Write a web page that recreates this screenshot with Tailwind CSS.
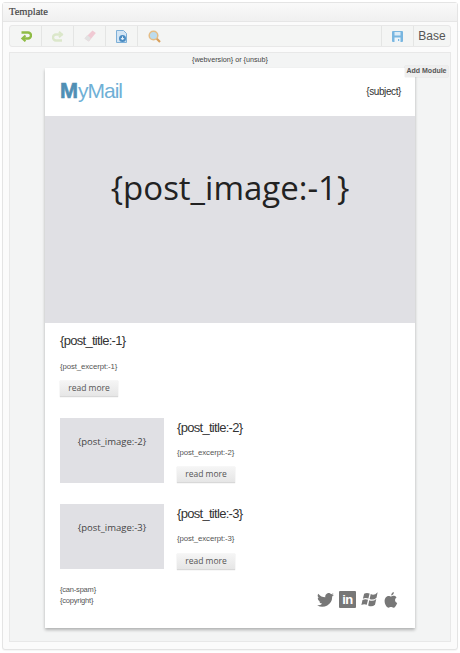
<!DOCTYPE html>
<html lang="en">
<head>
    <meta charset="UTF-8">
    <meta name="viewport" content="width=device-width, initial-scale=1.0">
    <title>Template</title>
    <script src="https://cdn.jsdelivr.net/npm/@tailwindcss/browser@4"></script>
</head>
<body class="bg-white font-['Liberation_Sans',sans-serif] text-[#333] overflow-hidden">
    <div class="w-[460px] h-[653px] pt-[2px] pl-[2px] pr-[2px]">
        <div class="h-[648px] border border-[#e4e4e4] rounded-[3px] bg-[#fbfbfb] shadow-[0_1px_1px_rgba(0,0,0,0.04)]">
            <!-- Header -->
            <div class="h-[19px] flex items-center pl-[6px] border-b border-[#e6e6e6] bg-gradient-to-b from-[#f9f9f9] to-[#f0f0f0] font-['Liberation_Serif',serif] text-[10.500px] [-webkit-text-stroke:0.2px_#464646] text-[#464646]">
                Template
            </div>

            <div class="pt-[3px] px-[6px]">
                <!-- Toolbar -->
                <div class="h-[22px] w-[442px] flex items-stretch border border-[#e8e8e8] rounded-[3px] bg-[#f4f5f4]">
                    <div class="w-[32px] flex items-center justify-center border-r border-[#e4e5e4]">
                        <svg width="12" height="11" viewBox="0 0 12 11" fill="none" stroke="#8fbc45" stroke-width="2.4"><path d="M1.500 1.500h6.500a3 3 0 0 1 0 6H3.500"/><path d="M5.500 4.500 2.300 7.500l3.200 2.800" stroke-width="2"/></svg>
                    </div>
                    <div class="w-[32px] flex items-center justify-center border-r border-[#e4e5e4]">
                        <svg width="12" height="11" viewBox="0 0 12 11" fill="none" stroke="#dbe7ca" stroke-width="2.400"><path d="M10.500 3.500H4a3 3 0 0 0 0 6h6"/><path d="M7 .7 10 3.500 7 6.200" stroke-width="2"/></svg>
                    </div>
                    <div class="w-[32px] flex items-center justify-center border-r border-[#e4e5e4]">
                        <svg width="12" height="12" viewBox="0 0 12 12"><path d="M8.500.5 11.800 3 4.800 11.500 .5 8.500z" fill="#f0c9d3"/><path d="M3.200 5 6.800 8 4.800 11.500 .5 8.500z" fill="#e2e2e2"/></svg>
                    </div>
                    <div class="w-[32px] flex items-center justify-center border-r border-[#e4e5e4]">
                        <svg width="11" height="13" viewBox="0 0 11 13"><path d="M.5.500h7l3 3v9H.5z" fill="#d3e5f4" stroke="#7eb0d8"/><circle cx="6.500" cy="8.500" r="3.500" fill="#4a8cc2"/><path d="M6.500 6.500v2.500M5 8l1.500 2L8 8" fill="none" stroke="#e8f2fa"/></svg>
                    </div>
                    <div class="w-[32px] flex items-center justify-center">
                        <svg width="13" height="13" viewBox="0 0 13 13"><circle cx="5.500" cy="5.500" r="4.300" fill="#bcdcee" stroke="#e5bd85" stroke-width="1.500"/><path d="M8.800 8.800l3.200 3.200" stroke="#d9a05c" stroke-width="2.200"/></svg>
                    </div>
                    <div class="ml-auto w-[32px] flex items-center justify-center border-l border-[#e4e5e4]">
                        <svg width="11" height="11" viewBox="0 0 11 11"><rect width="11" height="11" rx="1" fill="#79b6e0"/><rect x="2.500" y="1" width="6" height="3.500" fill="#dcecf7"/><rect x="2.500" y="6.500" width="6" height="4.500" fill="#eef5fa"/><rect x="6" y="8" width="1.200" height="2" fill="#79b6e0"/></svg>
                    </div>
                    <div class="w-[37px] flex items-center justify-center border-l border-[#e4e5e4] text-[12px] text-[#555]">Base</div>
                </div>

                <!-- Canvas -->
                <div class="relative mt-[5px] h-[590px] w-[442px] border border-[#e8e8e8] bg-[#f3f4f4] pl-[35px]">
                    <div class="h-[15px] w-[370px] flex items-center justify-center text-[7.200px] text-[#444]">{webversion} or {unsub}</div>
                    <div class="w-[370px] h-[560px] bg-white shadow-[0_2px_3px_rgba(0,0,0,0.28)]">
                        <div class="h-[48px] flex items-center justify-between pl-[15px] pr-[14px] pb-[2px]">
                            <div class="flex items-baseline text-[21px] leading-none tracking-[-1px] text-[#6fb0d6]"><span class="font-bold text-[21.600px] tracking-[0] text-[#4f8fb4] [-webkit-text-stroke:0.6px_#4f8fb4]">M</span>yMail</div>
                            <div class="text-[10px] tracking-[-0.4px] text-[#333]">{subject}</div>
                        </div>
                        <div class="h-[207px] pb-[64px] bg-[#e0e0e4] flex items-center justify-center font-['Open_Sans',sans-serif] text-[33px] text-[#222]">{post_image:-1}</div>

                        <div class="pl-[15px] pt-[9px]">
                            <div class="text-[13px] leading-[18px] tracking-[-0.7px] text-[#333]">{post_title:-1}</div>
                            <div class="mt-[12px] text-[7.800px] leading-[10px] tracking-[-0.1px] text-[#555]">{post_excerpt:-1}</div>
                            <div class="mt-[9px] w-[58px] h-[16px] flex items-center justify-center border-b border-[#d8d8d8] bg-gradient-to-b from-[#f5f5f5] to-[#e6e6e6] font-['Open_Sans',sans-serif] text-[8.500px] text-[#555] shadow-[0_0_1px_rgba(0,0,0,0.2)]">read more</div>
                        </div>

                        <div class="pl-[15px] pt-[21px] flex gap-[13px]">
                            <div class="w-[104px] h-[65px] pb-[17px] bg-[#e0e0e4] flex items-center justify-center font-['Open_Sans',sans-serif] text-[9.500px] text-[#444]">{post_image:-2}</div>
                            <div class="pt-[1px]">
                                <div class="text-[13px] leading-[18px] tracking-[-0.7px] text-[#333]">{post_title:-2}</div>
                                <div class="mt-[11px] text-[7.800px] leading-[10px] tracking-[-0.1px] text-[#555]">{post_excerpt:-2}</div>
                                <div class="mt-[9px] w-[58px] h-[16px] flex items-center justify-center border-b border-[#d8d8d8] bg-gradient-to-b from-[#f5f5f5] to-[#e6e6e6] font-['Open_Sans',sans-serif] text-[8.500px] text-[#555] shadow-[0_0_1px_rgba(0,0,0,0.2)]">read more</div>
                            </div>
                        </div>

                        <div class="pl-[15px] pt-[21px] flex gap-[13px]">
                            <div class="w-[104px] h-[65px] pb-[17px] bg-[#e0e0e4] flex items-center justify-center font-['Open_Sans',sans-serif] text-[9.500px] text-[#444]">{post_image:-3}</div>
                            <div class="pt-[1px]">
                                <div class="text-[13px] leading-[18px] tracking-[-0.7px] text-[#333]">{post_title:-3}</div>
                                <div class="mt-[11px] text-[7.800px] leading-[10px] tracking-[-0.1px] text-[#555]">{post_excerpt:-3}</div>
                                <div class="mt-[10px] w-[58px] h-[16px] flex items-center justify-center border-b border-[#d8d8d8] bg-gradient-to-b from-[#f5f5f5] to-[#e6e6e6] font-['Open_Sans',sans-serif] text-[8.500px] text-[#555] shadow-[0_0_1px_rgba(0,0,0,0.2)]">read more</div>
                            </div>
                        </div>

                        <!-- Footer -->
                        <div class="pl-[15px] pr-[17px] pt-[14px] flex justify-between">
                            <div class="text-[7.500px] leading-[11px] tracking-[-0.2px] text-[#555]">
                                <div>{can-spam}</div>
                                <div>{copyright}</div>
                            </div>
                            <div class="flex items-center gap-[5px] pt-[5px] h-[26px]">
                                <svg width="17" height="14" viewBox="0 0 24 20" fill="#777"><path d="M24 2.400a10 10 0 0 1-2.800.8A5 5 0 0 0 23.300.5a10 10 0 0 1-3.100 1.200 4.900 4.900 0 0 0-8.400 4.500A14 14 0 0 1 1.700.9a4.900 4.900 0 0 0 1.500 6.600 5 5 0 0 1-2.200-.6 4.900 4.900 0 0 0 3.900 4.900 5 5 0 0 1-2.200.1 4.900 4.900 0 0 0 4.600 3.400A9.900 9.900 0 0 1 0 17.400 14 14 0 0 0 21.500 5a10 10 0 0 0 2.500-2.600z"/></svg>
                                <div class="w-[17px] h-[17px] rounded-[1px] bg-[#777] flex items-end justify-center font-bold text-[13px] leading-[16px] tracking-[-0.5px] text-white">in</div>
                                <svg width="17" height="15" viewBox="0.7 0.8 13.200 12" fill="#777"><path d="M3 2.200Q5 1 7.400 2L6.400 6Q4 5 2 6.200z"/><path d="M8.300 2.400Q11 4 13.800.9L12.900 5.300Q10.300 7.700 7.400 6.300z"/><path d="M1.700 7.200Q4 6 6.100 7L5.100 11Q3 10 .8 11.200z"/><path d="M7.100 7.300Q10 8.800 12.700 6.300L11.700 11Q9 13.200 6.200 11.500z"/></svg>
                                <svg class="ml-[1px]" width="14" height="16" viewBox="0 0 14 16" fill="#777"><path d="M9.800 0Q10 2.800 7.300 3.500 7 1 9.800 0z"/><path d="M7.200 4.400C8.400 3.700 10.900 3.300 12.500 5.400 10.300 6.900 10.700 9.900 13.200 10.900 12.300 13.300 10.900 15.700 9.500 15.700 8.500 15.700 8 15 7 15 6 15 5.300 15.700 4.500 15.700 2.800 15.700.6 12.300.6 9 .6 5.700 2.900 3.900 4.700 3.900 5.800 3.900 6.500 4.500 7.200 4.400z"/></svg>
                            </div>
                        </div>
                    </div>
                    <div class="absolute right-[2px] top-[13px] h-[11px] w-[43px] flex items-center justify-center bg-[#eeeeee] text-[7px] font-bold text-[#555] shadow-[0_0_1px_rgba(0,0,0,0.2)]">Add Module</div>
                </div>
            </div>
        </div>
    </div>
</body>
</html>
